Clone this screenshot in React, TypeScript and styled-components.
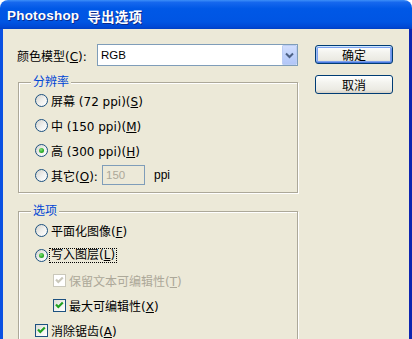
import React from 'react';
import styled, { createGlobalStyle } from 'styled-components';

const GlobalStyle = createGlobalStyle`
  html, body {
    margin: 0;
    padding: 0;
    background: #ffffff;
  }
  body {
    font-family: 'DejaVu Sans', 'Noto Sans CJK SC', sans-serif;
    font-size: 12px;
    color: #000000;
  }
`;

const Window = styled.div`
  width: 412px;
  height: 339px;
  display: flex;
  flex-direction: column;
  overflow: hidden;
  border-radius: 8px 8px 0 0;
`;

const TitleBar = styled.div`
  height: 29px;
  flex: none;
  box-sizing: border-box;
  display: flex;
  align-items: center;
  padding: 2px 0 0 7px;
  background: linear-gradient(
    to bottom,
    #3d8ff8 0%,
    #1668ee 8%,
    #0058e6 30%,
    #0055e3 75%,
    #0049d6 92%,
    #0040c4 100%
  );
  color: #ffffff;
  font-family: 'Liberation Sans', 'Noto Sans CJK SC', sans-serif;
  font-weight: bold;
  font-size: 13.5px;
  letter-spacing: 0.2px;
  text-shadow: 1px 1px 0 #0c2a8c;
`;

const TitleGap = styled.span`
  display: inline-block;
  width: 8px;
`;

const Body = styled.div`
  flex: 1;
  display: flex;
  gap: 16px;
  background: #ece9d8;
  border-left: 3px solid #0a50e2;
  border-right: 3px solid #0d25b0;
  padding: 15px 0 0 15px;
`;

const LeftColumn = styled.div`
  width: 281px;
  display: flex;
  flex-direction: column;
`;

const FieldRow = styled.div`
  height: 22px;
  display: flex;
  align-items: center;
`;

const FieldLabel = styled.span`
  width: 80px;
  margin-left: -1px;
  white-space: nowrap;
`;

const Combo = styled.div`
  width: 201px;
  height: 22px;
  box-sizing: border-box;
  border: 1px solid #7f9db9;
  background: #ffffff;
  display: flex;
  align-items: center;
`;

const ComboValue = styled.span`
  flex: 1;
  padding-left: 3px;
  font-family: 'Liberation Sans', sans-serif;
  font-size: 11.5px;
`;

const ComboButton = styled.span`
  width: 15px;
  height: 20px;
  box-sizing: border-box;
  border: 1px solid #bccdf4;
  border-radius: 1px;
  background: linear-gradient(to bottom, #d2defd 0%, #c0d2fb 50%, #b2c6f7 100%);
  display: flex;
  align-items: center;
  justify-content: center;
`;

const Group = styled.fieldset<{ $gap: number }>`
  margin: ${({ $gap }) => $gap}px 0 0;
  padding: 0;
  width: 280px;
  box-sizing: border-box;
  min-width: 0;
  border: 1px solid #aca899;
  box-shadow: 1px 1px 0 #ffffff, inset 1px 1px 0 #ffffff;
`;

const Legend = styled.legend`
  margin-left: 12px;
  padding: 0 2px;
  line-height: 15px;
  color: #0046d5;
  background: #ece9d8;
`;

const GroupBody = styled.div<{ $top: number; $bottom: number }>`
  display: flex;
  flex-direction: column;
  gap: 5px;
  padding: ${({ $top }) => $top}px 0 ${({ $bottom }) => $bottom}px 16px;
`;

const OptionRow = styled.div<{ $indent?: boolean }>`
  height: 20px;
  display: flex;
  align-items: center;
  gap: 3px;
  padding-left: ${({ $indent }) => ($indent ? 18 : 0)}px;
  white-space: nowrap;
`;

const Radio = styled.span<{ $checked?: boolean }>`
  position: relative;
  width: 13px;
  height: 13px;
  box-sizing: border-box;
  flex: none;
  border-radius: 50%;
  border: 1px solid #1c5180;
  background: linear-gradient(135deg, #d5d4ce 0%, #f1f1ef 55%, #ffffff 100%);
  &::after {
    content: '';
    display: ${({ $checked }) => ($checked ? 'block' : 'none')};
    position: absolute;
    left: 3px;
    top: 3px;
    width: 5px;
    height: 5px;
    border-radius: 50%;
    background: radial-gradient(circle at 40% 35%, #7fe07a 0%, #2fae2b 55%, #1a8a18 100%);
  }
`;

const CheckBox = styled.span<{ $disabled?: boolean }>`
  width: 13px;
  height: 13px;
  box-sizing: border-box;
  flex: none;
  border: 1px solid ${({ $disabled }) => ($disabled ? '#cac8bb' : '#1c5180')};
  background: ${({ $disabled }) =>
    $disabled ? '#ffffff' : 'linear-gradient(135deg, #dcdcd7 0%, #f4f4f1 60%, #ffffff 100%)'};
  display: flex;
  align-items: center;
  justify-content: center;
`;

const OptionText = styled.span<{ $disabled?: boolean; $width?: number }>`
  color: ${({ $disabled }) => ($disabled ? '#aca899' : '#000000')};
  ${({ $width }) => ($width ? `width: ${$width}px;` : '')}
  u {
    text-underline-offset: 1px;
  }
`;

const FocusText = styled.span`
  outline: 1px dotted #000000;
  outline-offset: 0;
  padding: 0 1px;
  margin-left: -1px;
  line-height: 13px;
`;

const NumberBox = styled.span`
  width: 43px;
  height: 20px;
  box-sizing: border-box;
  border: 1px solid #7f9db9;
  background: #ece9d8;
  color: #aca899;
  font-family: 'Liberation Sans', sans-serif;
  font-size: 11.5px;
  line-height: 18px;
  padding-left: 3px;
`;

const UnitText = styled.span`
  margin-left: 6px;
  font-family: 'Liberation Sans', sans-serif;
  font-size: 12px;
`;

const ButtonColumn = styled.div`
  display: flex;
  flex-direction: column;
  gap: 11px;
  padding-top: 1px;
`;

const DialogButton = styled.button<{ $default?: boolean }>`
  width: 78px;
  height: 19px;
  padding: 0;
  border: 1px solid #003c74;
  border-radius: 3px;
  background: linear-gradient(to bottom, #ffffff 0%, #f3f3ee 40%, #ebeae3 80%, #d6d0c5 100%);
  font-family: 'Noto Sans CJK SC', sans-serif;
  font-size: 12px;
  line-height: 15px;
  color: #000000;
  box-shadow: ${({ $default }) =>
    $default
      ? 'inset 0 1px 0 #cee7ff, inset 0 -1px 0 #4a78de, inset 1px 0 0 #9fbdf5, inset -1px 0 0 #6d93ea, inset 0 0 0 2px #7ea2ee'
      : 'none'};
`;

const Check: React.FC<{ color: string }> = ({ color }) => (
  <svg width="11" height="11" viewBox="0 0 11 11">
    <path d="M2 4.6 L4.3 7 L8.8 2.5" fill="none" stroke={color} strokeWidth="2.2" />
  </svg>
);

const Chevron = () => (
  <svg width="9" height="7" viewBox="0 0 9 7">
    <path d="M1 1.5 L4.5 5 L8 1.5" fill="none" stroke="#4d6185" strokeWidth="2" />
  </svg>
);

export default function App() {
  return (
    <>
      <GlobalStyle />
      <Window>
        <TitleBar>
          Photoshop<TitleGap />导出选项
        </TitleBar>
        <Body>
          <LeftColumn>
            <FieldRow>
              <FieldLabel>
                颜色模型(<u>C</u>):
              </FieldLabel>
              <Combo>
                <ComboValue>RGB</ComboValue>
                <ComboButton>
                  <Chevron />
                </ComboButton>
              </Combo>
            </FieldRow>

            <Group $gap={9}>
              <Legend>分辨率</Legend>
              <GroupBody $top={0} $bottom={7}>
                <OptionRow>
                  <Radio />
                  <OptionText>
                    屏幕 (72 ppi)(<u>S</u>)
                  </OptionText>
                </OptionRow>
                <OptionRow>
                  <Radio />
                  <OptionText>
                    中 (150 ppi)(<u>M</u>)
                  </OptionText>
                </OptionRow>
                <OptionRow>
                  <Radio $checked />
                  <OptionText>
                    高 (300 ppi)(<u>H</u>)
                  </OptionText>
                </OptionRow>
                <OptionRow>
                  <Radio />
                  <OptionText $width={48}>
                    其它(<u>O</u>):
                  </OptionText>
                  <NumberBox>150</NumberBox>
                  <UnitText>ppi</UnitText>
                </OptionRow>
              </GroupBody>
            </Group>

            <Group $gap={11}>
              <Legend>选项</Legend>
              <GroupBody $top={1} $bottom={20}>
                <OptionRow>
                  <Radio />
                  <OptionText>
                    平面化图像(<u>F</u>)
                  </OptionText>
                </OptionRow>
                <OptionRow>
                  <Radio $checked />
                  <FocusText>
                    写入图层(<u>L</u>)
                  </FocusText>
                </OptionRow>
                <OptionRow $indent>
                  <CheckBox $disabled>
                    <Check color="#cac8bb" />
                  </CheckBox>
                  <OptionText $disabled>
                    保留文本可编辑性(<u>T</u>)
                  </OptionText>
                </OptionRow>
                <OptionRow $indent>
                  <CheckBox>
                    <Check color="#21a121" />
                  </CheckBox>
                  <OptionText>
                    最大可编辑性(<u>X</u>)
                  </OptionText>
                </OptionRow>
                <OptionRow>
                  <CheckBox>
                    <Check color="#21a121" />
                  </CheckBox>
                  <OptionText>
                    消除锯齿(<u>A</u>)
                  </OptionText>
                </OptionRow>
              </GroupBody>
            </Group>
          </LeftColumn>

          <ButtonColumn>
            <DialogButton $default>确定</DialogButton>
            <DialogButton>取消</DialogButton>
          </ButtonColumn>
        </Body>
      </Window>
    </>
  );
}
